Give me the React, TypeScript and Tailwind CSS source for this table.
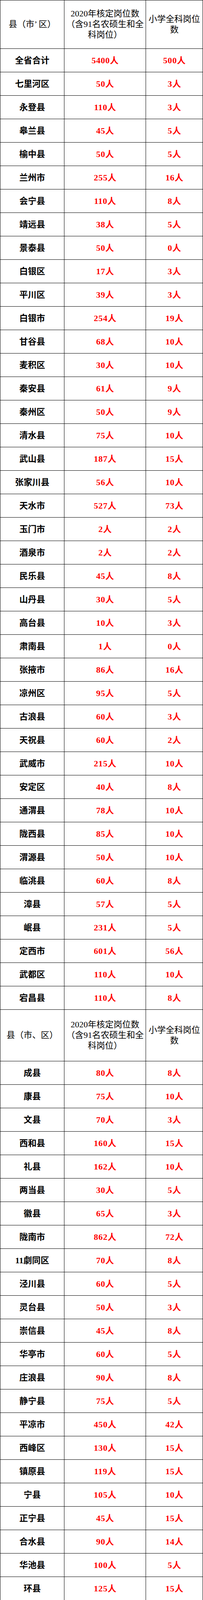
import React from "react";

type Row = [string, number, number];

const part1: Row[] = [
  ["全省合计", 5400, 500],
  ["七里河区", 50, 3],
  ["永登县", 110, 3],
  ["皋兰县", 45, 5],
  ["榆中县", 50, 5],
  ["兰州市", 255, 16],
  ["会宁县", 110, 8],
  ["靖远县", 38, 5],
  ["景泰县", 50, 0],
  ["白银区", 17, 3],
  ["平川区", 39, 3],
  ["白银市", 254, 19],
  ["甘谷县", 68, 10],
  ["麦积区", 30, 10],
  ["秦安县", 61, 9],
  ["秦州区", 50, 9],
  ["清水县", 75, 10],
  ["武山县", 187, 15],
  ["张家川县", 56, 10],
  ["天水市", 527, 73],
  ["玉门市", 2, 2],
  ["酒泉市", 2, 2],
  ["民乐县", 45, 8],
  ["山丹县", 30, 5],
  ["高台县", 10, 3],
  ["肃南县", 1, 0],
  ["张掖市", 86, 16],
  ["凉州区", 95, 5],
  ["古浪县", 60, 3],
  ["天祝县", 60, 2],
  ["武威市", 215, 10],
  ["安定区", 40, 8],
  ["通渭县", 78, 10],
  ["陇西县", 85, 10],
  ["渭源县", 50, 10],
  ["临洮县", 60, 8],
  ["漳县", 57, 5],
  ["岷县", 231, 5],
  ["定西市", 601, 56],
  ["武都区", 110, 10],
  ["宕昌县", 110, 8],
];

const part2: Row[] = [
  ["成县", 80, 8],
  ["康县", 75, 10],
  ["文县", 70, 3],
  ["西和县", 160, 15],
  ["礼县", 162, 10],
  ["两当县", 30, 5],
  ["徽县", 65, 3],
  ["陇南市", 862, 72],
  ["11劇同区", 70, 8],
  ["泾川县", 60, 5],
  ["灵台县", 50, 3],
  ["崇信县", 45, 8],
  ["华亭市", 60, 5],
  ["庄浪县", 90, 8],
  ["静宁县", 75, 5],
  ["平凉市", 450, 42],
  ["西峰区", 130, 15],
  ["镇原县", 119, 15],
  ["宁县", 105, 10],
  ["正宁县", 45, 15],
  ["合水县", 90, 14],
  ["华池县", 100, 5],
  ["环县", 125, 15],
  ["庆城县", 180, 8],
  ["庆阳市", 894, 97],
  ["临夏市", 45, 3],
  ["临夏县", 144, 8],
  ["积石山县", 110, 8],
  ["和政县", 98, 8],
  ["康乐县", 110, 10],
  ["广河县", 110, 8],
  ["永靖县", 90, 10],
  ["东乡县", 141, 8],
  ["临夏州", 848, 63],
  ["临潭县", 70, 3],
  ["卓尼县", 41, 4],
  ["舟曲县", 35, 4],
  ["迭部县", 50, 3],
  ["碌曲县", 75, 4],
  ["玛曲县", 65, 4],
  ["夏河县", 30, 4],
  ["合作市", 40, 8],
  ["甘南州", 406, 34],
];

const font = {
  fontFamily: '"Liberation Serif", "Noto Sans CJK SC", serif',
};

const Num = ({ n }: { n: number }) => (
  <span className="font-bold text-[#ff0000]">
    <span className="tracking-[0.8px]">{n}</span>人
  </span>
);

const Header = ({ first, h }: { first: string; h: string }) => (
  <div className={`flex border-b border-black text-[22px] leading-[26.7px] text-black ${h}`}>
    <div className="flex w-[164px] items-center justify-center border-r border-black whitespace-nowrap">
      {first}
    </div>
    <div className="flex w-[209px] items-center justify-center border-r border-black text-center whitespace-nowrap">
      <div>
        2020年核定岗位数
        <br />
        （含91名农硕生和全
        <br />
        科岗位）
      </div>
    </div>
    <div className="flex w-[146px] items-center justify-center border-r border-black text-center whitespace-nowrap">
      <div>
        小学全科岗位
        <br />
        数
      </div>
    </div>
  </div>
);

const DataRow = ({ row }: { row: Row }) => (
  <div className="flex h-[60px] border-b border-black text-[22px]">
    <div className="flex w-[164px] items-center justify-center border-r border-black font-bold text-black whitespace-nowrap">
      {row[0]}
    </div>
    <div className="flex w-[209px] items-center justify-center border-r border-black">
      <Num n={row[1]} />
    </div>
    <div className="flex w-[146px] items-center justify-center border-r border-black">
      <Num n={row[2]} />
    </div>
  </div>
);

export default function App() {
  return (
    <div className="w-[520px] bg-white" style={font}>
      <div className="border-t border-l border-black">
        {/* first block */}
        <Header first="县（市’ 区）" h="h-[124px]" />
        {part1.map((r) => (
          <DataRow key={r[0]} row={r} />
        ))}

        {/* second block */}
        <Header first="县（市、区）" h="h-[132px]" />
        {part2.map((r) => (
          <DataRow key={r[0]} row={r} />
        ))}
      </div>
    </div>
  );
}
